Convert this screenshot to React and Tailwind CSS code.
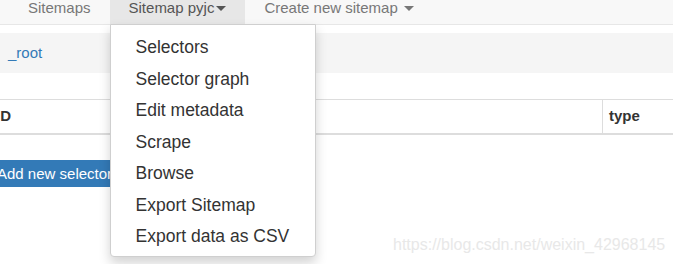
import React from "react";

const menuItems = [
  "Selectors",
  "Selector graph",
  "Edit metadata",
  "Scrape",
  "Browse",
  "Export Sitemap",
  "Export data as CSV",
];

function Caret({ color }) {
  return (
    <svg width="10" height="5" viewBox="0 0 10 5" className="inline-block">
      <path d="M0 0 L10 0 L5 5 Z" fill={color} />
    </svg>
  );
}

export default function App() {
  return (
    <div className="relative w-[673px] h-[264px] overflow-hidden bg-white font-['Liberation_Sans',Arial,sans-serif]">
      {/* navbar */}
      <div className="flex h-[25px] pl-[9px] bg-[#f8f8f8] border-b border-[#e7e7e7]">
        <div className="h-[24px] px-[19px] text-[15px] leading-[15px] text-[#777]">Sitemaps</div>
        <div className="relative h-[24px] px-[19px] bg-[#e7e7e7] text-[15px] leading-[15px] text-[#555] flex items-start">
          <span>Sitemap pyjc</span>
          <span className="ml-[2px] mt-[6px] flex">
            <Caret color="#555" />
          </span>
          {/* dropdown */}
          <div className="absolute left-0 top-full z-10 w-[206px] pt-[7px] pb-[3px] bg-white border border-[#cfcfcf] rounded-b-[4px] shadow-[0_6px_12px_rgba(0,0,0,0.175)]">
            {menuItems.map((item) => (
              <div
                key={item}
                className="h-[31.5px] px-[25px] text-[17.5px] leading-[31.5px] text-[#333] whitespace-nowrap"
              >
                {item}
              </div>
            ))}
          </div>
        </div>
        <div className="h-[24px] px-[19px] text-[15px] leading-[15px] text-[#777] flex items-start">
          <span>Create new sitemap</span>
          <span className="ml-[6px] mt-[6px] flex">
            <Caret color="#777" />
          </span>
        </div>
      </div>

      {/* breadcrumb */}
      <div className="mt-[8px] h-[40px] bg-[#f5f5f5] flex items-center px-[8px]">
        <span className="text-[15px] text-[#337ab7]">_root</span>
      </div>

      {/* selector table, scrolled a little to the left like the page */}
      <div className="-ml-[14px]">
        <div className="mt-[26px] flex h-[36px] border-t border-b-2 border-[#ddd] text-[15px] font-bold text-[#333]">
          <div className="w-[616px] px-[10px] flex items-center">ID</div>
          <div className="flex-1 border-l border-[#ddd] pl-[6px] flex items-center">type</div>
        </div>
        <button className="mt-[25px] h-[27px] px-[11px] rounded-[4px] bg-[#337ab7] text-white text-[15px] leading-[27px] whitespace-nowrap">
          Add new selector
        </button>
      </div>

      {/* watermark */}
      <div className="absolute left-[393px] top-[236px] text-[16px] leading-[18px] text-[#e8e8e8] whitespace-nowrap">
        https://blog.csdn.net/weixin_42968145
      </div>
    </div>
  );
}
